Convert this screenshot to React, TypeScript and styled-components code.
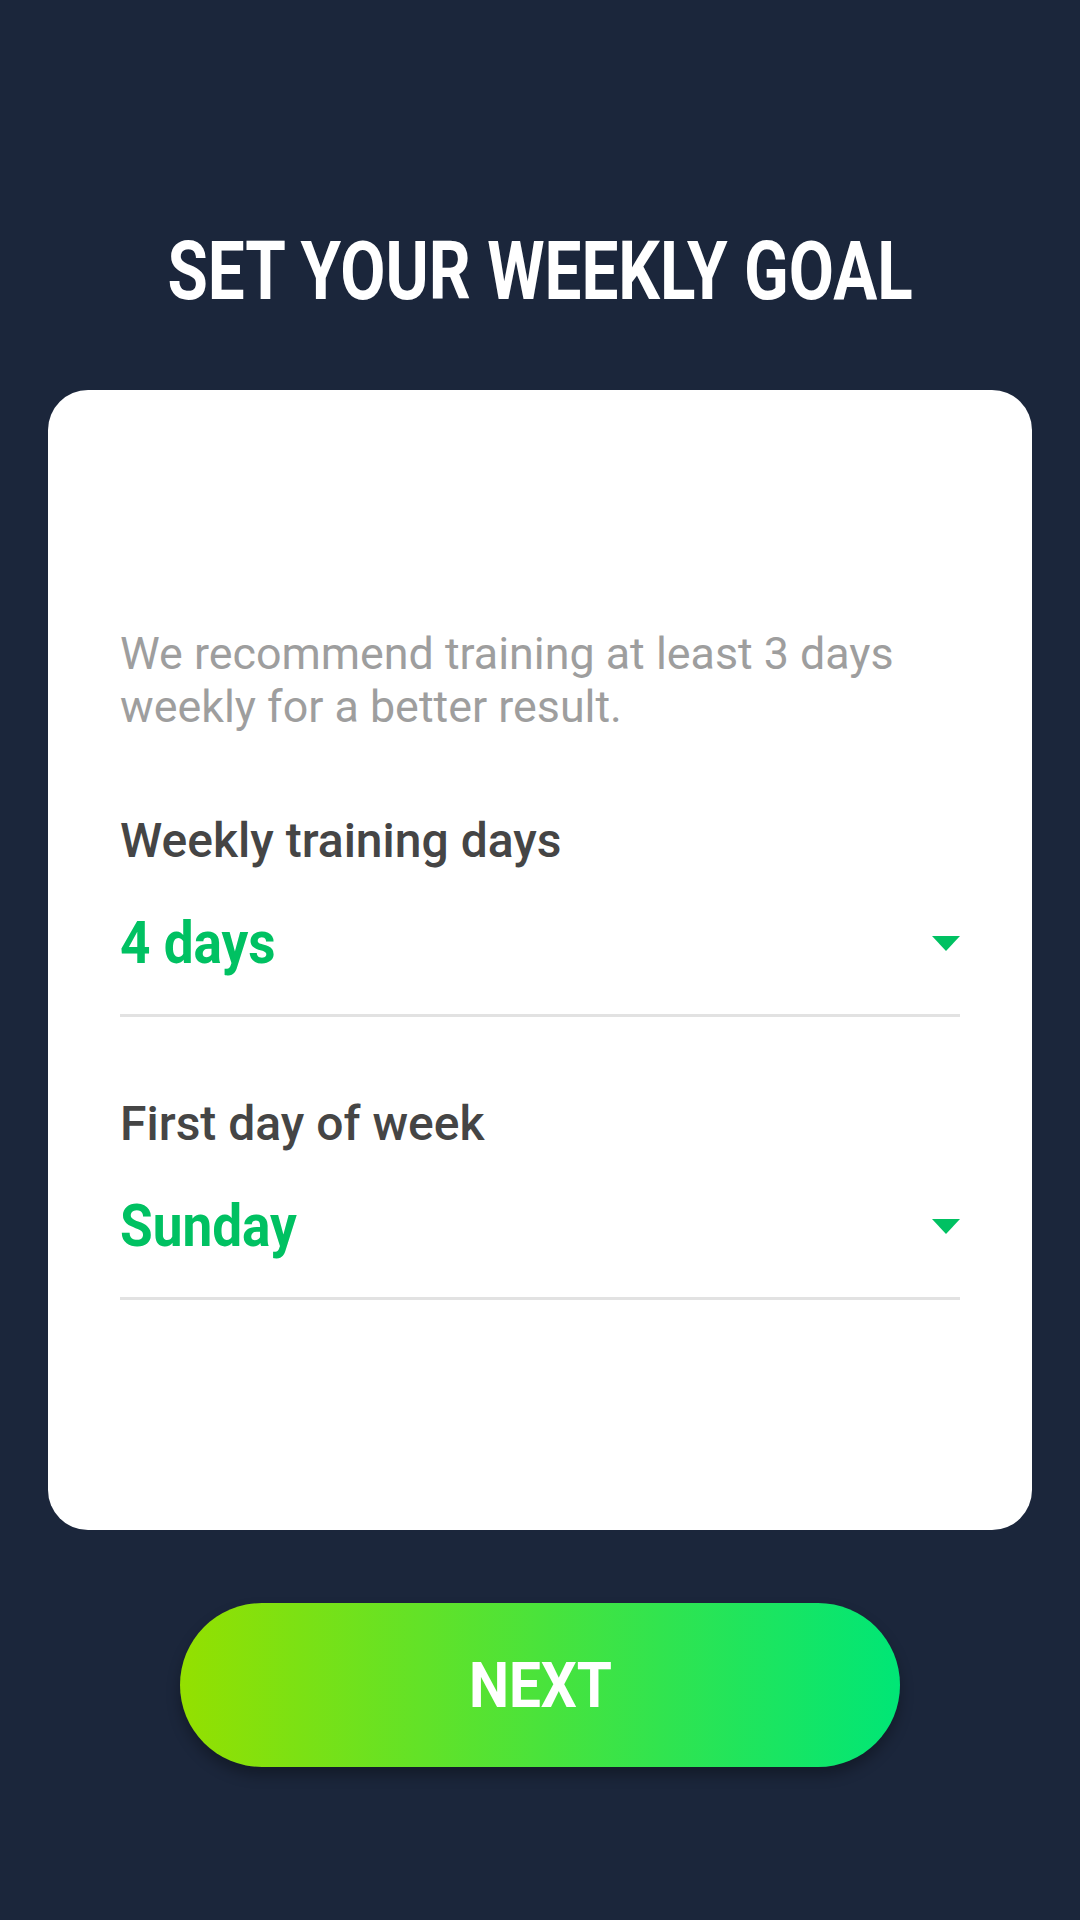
import React from "react";
import styled, { createGlobalStyle } from "styled-components";

const GlobalStyle = createGlobalStyle`
  html, body {
    margin: 0;
    padding: 0;
    background: #1b263b;
  }
  body {
    font-family: Roboto, "Liberation Sans", sans-serif;
  }
  * { box-sizing: border-box; }
`;

const Page = styled.div`
  min-height: 1920px;
  width: 1080px;
  display: flex;
  flex-direction: column;
  align-items: center;
  padding-top: 224px;
`;

const Title = styled.h1`
  margin: 0;
  height: 96px;
  font-family: Roboto, sans-serif;
  font-weight: 700;
  font-size: 81px;
  line-height: 96px;
  color: #ffffff;
  text-align: center;
  white-space: nowrap;
`;

const Condensed = styled.span<{ $scale: number; $origin?: string }>`
  display: inline-block;
  transform: scaleX(${(p) => p.$scale});
  transform-origin: ${(p) => p.$origin ?? "center"} center;
`;

const Card = styled.section`
  margin-top: 70px;
  width: 984px;
  background: #ffffff;
  border-radius: 40px;
  padding: 237px 72px 230px;
  display: flex;
  flex-direction: column;
`;

const Hint = styled.p`
  margin: 0;
  font-size: 44.8px;
  line-height: 53px;
  color: #9e9e9e;
  font-weight: 400;
`;

const Field = styled.div`
  margin-top: 80px;
  display: flex;
  flex-direction: column;
  & + & {
    margin-top: 79px;
  }
`;

const Label = styled.div`
  font-size: 48px;
  line-height: 56px;
  font-weight: 500;
  color: #454545;
`;

const SelectRow = styled.div`
  margin-top: 39px;
  height: 70px;
  display: flex;
  align-items: center;
  justify-content: space-between;
`;

const Value = styled.div`
  font-size: 59px;
  line-height: 70px;
  font-weight: 700;
  color: #00c162;
  white-space: nowrap;
`;

const Caret = styled.svg`
  width: 28px;
  height: 15px;
  flex: none;
`;

const Divider = styled.div`
  margin-top: 36px;
  height: 3px;
  background: #e2e2e2;
`;

const NextButton = styled.button`
  margin-top: 73px;
  width: 720px;
  height: 164px;
  border: none;
  border-radius: 82px;
  background: linear-gradient(90deg, #94e000 0%, #00e676 100%);
  box-shadow: 0 8px 14px rgba(0, 0, 0, 0.3);
  color: #ffffff;
  font-family: Roboto, sans-serif;
  font-weight: 700;
  font-size: 63px;
  display: flex;
  align-items: center;
  justify-content: center;
  padding: 0;
  cursor: pointer;
`;

const Select: React.FC<{ label: string; value: string }> = ({ label, value }) => (
  <Field>
    <Label>{label}</Label>
    <SelectRow>
      <Value>
        <Condensed $scale={0.9} $origin="left">
          {value}
        </Condensed>
      </Value>
      <Caret viewBox="0 0 28 15">
        <polygon points="0,0 28,0 14,15" fill="#00c162" />
      </Caret>
    </SelectRow>
    <Divider />
  </Field>
);

export default function App() {
  return (
    <>
      <GlobalStyle />
      <Page>
        <Title>
          <Condensed $scale={0.81}>SET YOUR WEEKLY GOAL</Condensed>
        </Title>
        <Card>
          <Hint>
            We recommend training at least 3 days weekly for a better result.
          </Hint>
          <Select label="Weekly training days" value="4 days" />
          <Select label="First day of week" value="Sunday" />
        </Card>
        <NextButton>
          <Condensed $scale={0.9}>NEXT</Condensed>
        </NextButton>
      </Page>
    </>
  );
}
